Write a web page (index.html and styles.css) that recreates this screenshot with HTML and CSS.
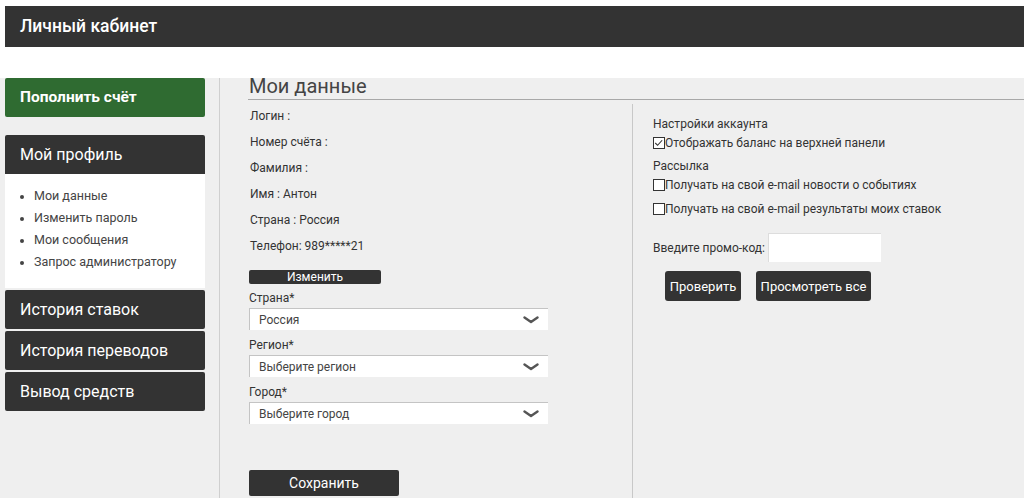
FILE: index.html
```html
<!DOCTYPE html>
<html lang="ru">
<head>
<meta charset="utf-8">
<title>Личный кабинет</title>
<link rel="stylesheet" href="styles.css">
</head>
<body>
<header class="topbar">Личный кабинет</header>
<div class="layout">
  <aside class="sidebar">
    <a class="side-btn green">Пополнить счёт</a>
    <a class="side-btn dark profile">Мой профиль</a>
    <ul class="sub-menu">
      <li>Мои данные</li>
      <li>Изменить пароль</li>
      <li>Мои сообщения</li>
      <li>Запрос администратору</li>
    </ul>
    <a class="side-btn dark">История ставок</a>
    <a class="side-btn dark">История переводов</a>
    <a class="side-btn dark">Вывод средств</a>
  </aside>
  <main class="main">
    <h1 class="title">Мои данные</h1>
    <div class="columns">
      <section class="col-left">
        <div class="info-row">Логин :</div>
        <div class="info-row">Номер счёта :</div>
        <div class="info-row">Фамилия :</div>
        <div class="info-row">Имя : Антон</div>
        <div class="info-row">Страна : Россия</div>
        <div class="info-row">Телефон: 989*****21</div>
        <button class="btn-small">Изменить</button>
        <label class="field-label">Страна*</label>
        <div class="select"><span>Россия</span><svg class="chev" width="16" height="8" viewBox="0 0 16 8"><path d="M1.5 1.5 L8 6 L14.5 1.5" fill="none" stroke="#555" stroke-width="2.4" stroke-linecap="round" stroke-linejoin="round"/></svg></div>
        <label class="field-label">Регион*</label>
        <div class="select"><span>Выберите регион</span><svg class="chev" width="16" height="8" viewBox="0 0 16 8"><path d="M1.5 1.5 L8 6 L14.5 1.5" fill="none" stroke="#555" stroke-width="2.4" stroke-linecap="round" stroke-linejoin="round"/></svg></div>
        <label class="field-label">Город*</label>
        <div class="select"><span>Выберите город</span><svg class="chev" width="16" height="8" viewBox="0 0 16 8"><path d="M1.5 1.5 L8 6 L14.5 1.5" fill="none" stroke="#555" stroke-width="2.4" stroke-linecap="round" stroke-linejoin="round"/></svg></div>
        <button class="btn-save">Сохранить</button>
      </section>
      <section class="col-right">
        <div class="group-title">Настройки аккаунта</div>
        <div class="check-row"><span class="box"><svg width="12" height="12" viewBox="0 0 12 12"><path d="M2.5 6 L5 8.5 L10 3" fill="none" stroke="#333" stroke-width="1.2"/></svg></span>Отображать баланс на верхней панели</div>
        <div class="group-title mail">Рассылка</div>
        <div class="check-row"><span class="box"></span>Получать на свой e-mail новости о событиях</div>
        <div class="check-row second"><span class="box"></span>Получать на свой e-mail результаты моих ставок</div>
        <div class="promo"><span>Введите промо-код:</span><span class="promo-input"></span></div>
        <div class="actions">
          <button class="btn-dark check">Проверить</button>
          <button class="btn-dark all">Просмотреть все</button>
        </div>
      </section>
    </div>
  </main>
</div>
</body>
</html>
```
FILE: styles.css
```css
html, body {
  margin: 0;
  padding: 0;
  background: #fff;
  font-family: Roboto, "Liberation Sans", Arial, sans-serif;
  color: #333;
}
.topbar {
  margin: 6px 0 0 5px;
  height: 41px;
  line-height: 41px;
  background: #333;
  color: #fff;
  padding-left: 15px;
  font-size: 17.5px;
  font-weight: 500;
}
.layout {
  margin-top: 31px;
  display: flex;
  background: #efefef;
  height: 420px;
}
.sidebar {
  width: 200px;
  margin-left: 5px;
  margin-right: 14px;
  display: flex;
  flex-direction: column;
  gap: 2px;
}
.side-btn {
  display: block;
  height: 39px;
  line-height: 39px;
  padding-left: 15px;
  color: #fff;
  font-size: 16px;
  border-radius: 2px;
  background: #333;
}
.side-btn.green {
  background: #2f6b31;
  font-weight: 700;
  font-size: 15.5px;
}
.side-btn.profile {
  margin-top: 16px;
  border-radius: 2px 2px 0 0;
}
.sub-menu {
  list-style: none;
  margin: -2px 0 0 0;
  padding: 11px 0 4px 0;
  background: #fff;
  height: 99px;
}
.sub-menu li {
  position: relative;
  height: 22px;
  line-height: 22px;
  padding-left: 29px;
  font-size: 12.5px;
  color: #444;
}
.sub-menu li::before {
  content: "";
  position: absolute;
  left: 15px;
  top: 10px;
  width: 4px;
  height: 4px;
  border-radius: 50%;
  background: #444;
}
.main {
  flex: 1;
  border-left: 1px solid #cfcfcf;
  padding-left: 29px;
  display: flex;
  flex-direction: column;
}
.title {
  margin: 0;
  font-size: 20px;
  font-weight: 400;
  color: #444;
  line-height: 16px;
  height: 21px;
  border-bottom: 1px solid #a8a8a8;
  margin-left: -1px;
  padding-left: 1px;
  overflow: visible;
}
.columns {
  display: flex;
  flex: 1;
}
.col-left {
  width: 383px;
  border-right: 1px solid #c8c8c8;
  padding-top: 3px;
  display: flex;
  flex-direction: column;
  align-items: flex-start;
  margin-top: 4px;
}
.info-row {
  height: 26px;
  line-height: 26px;
  font-size: 12px;
  color: #333;
  padding-left: 1px;
}
.info-row:first-child { margin-top: -4px; }
.btn-small {
  margin-top: 11px;
  width: 132px;
  height: 14px;
  padding: 0;
  border: none;
  border-radius: 2px;
  background: #333;
  color: #fff;
  font-family: inherit;
  font-size: 12px;
  line-height: 14px;
}
.field-label {
  margin-top: 5px;
  height: 18px;
  line-height: 18px;
  font-size: 12px;
  color: #333;
}
.select {
  margin-top: 1px;
  width: 280px;
  height: 21px;
  background: #fff;
  border-top: 1px solid #c4c4c4;
  border-left: 1px solid #c4c4c4;
  padding: 0 9px 0 9px;
  display: flex;
  align-items: center;
  justify-content: space-between;
  font-size: 12px;
  color: #444;
}
.select + .field-label { margin-top: 6px; }
.chev { margin-top: 1px; }
.btn-save {
  margin-top: 46px;
  width: 150px;
  height: 26px;
  padding: 0;
  border: none;
  border-radius: 2px;
  background: #333;
  color: #fff;
  font-family: inherit;
  font-size: 14px;
}
.col-right {
  padding: 15px 0 0 20px;
  display: flex;
  flex-direction: column;
  align-items: flex-start;
  font-size: 12px;
  color: #333;
}
.group-title {
  height: 18px;
  line-height: 18px;
}
.group-title.mail { margin-top: 5px; }
.check-row {
  height: 18px;
  line-height: 18px;
  display: flex;
  align-items: center;
  margin-top: 1px;
}
.check-row.second { margin-top: 6px; }
.box {
  width: 12px;
  height: 12px;
  box-sizing: border-box;
  border: 1px solid #333;
  background: #fff;
  display: inline-flex;
}
.box svg { margin: -1px 0 0 -1px; }
.promo {
  margin-top: 15px;
  display: flex;
  align-items: center;
  gap: 3px;
}
.promo-input {
  width: 112px;
  height: 28px;
  background: #fff;
  border-top: 1px solid #ddd;
  border-left: 1px solid #ddd;
}
.actions {
  margin: 9px 0 0 12px;
  display: flex;
  gap: 15px;
}
.btn-dark {
  height: 30px;
  padding: 0;
  border: none;
  border-radius: 3px;
  background: #333;
  color: #fff;
  font-family: inherit;
  font-size: 13px;
}
.btn-dark.check { width: 76px; }
.btn-dark.all { width: 115px; }
```
